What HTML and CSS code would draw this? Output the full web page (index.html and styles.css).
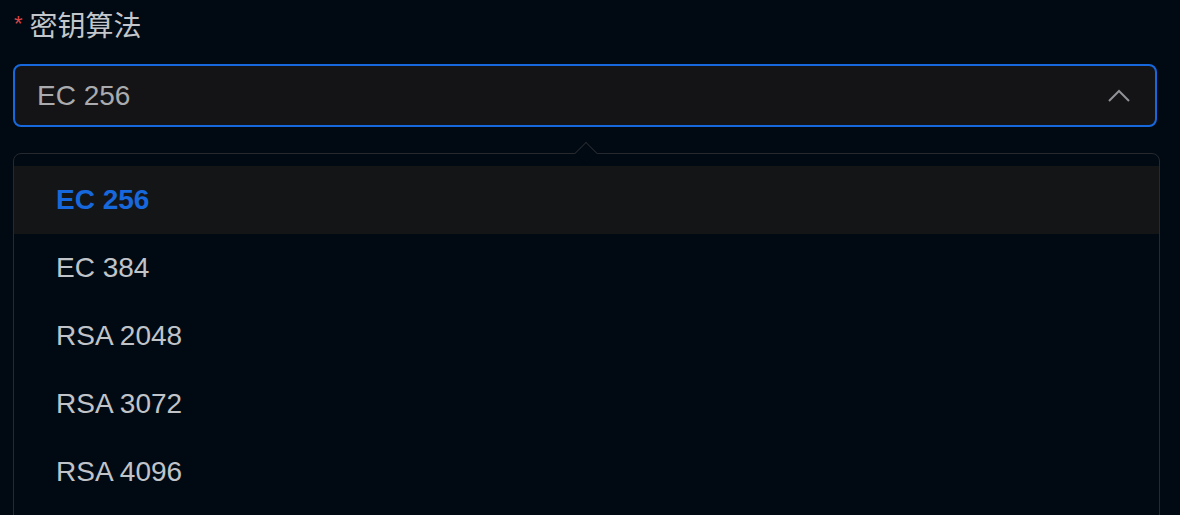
FILE: index.html
```html
<!DOCTYPE html>
<html lang="zh-CN">
<head>
    <meta charset="UTF-8">
    <title>密钥算法</title>
    <link rel="stylesheet" href="styles.css">
</head>
<body>
    <div class="form-item">
        <label class="label"><span class="required">*</span>密钥算法</label>
        <div class="select open">
            <span class="select-value">EC 256</span>
            <svg class="select-arrow" width="24" height="16" viewBox="0 0 24 16">
                <path d="M2 13 L12 3 L22 13" fill="none" stroke="#8f9296" stroke-width="2"/>
            </svg>
        </div>
        <div class="dropdown">
            <div class="dropdown-caret"></div>
            <div class="option selected">EC 256</div>
            <div class="option">EC 384</div>
            <div class="option">RSA 2048</div>
            <div class="option">RSA 3072</div>
            <div class="option">RSA 4096</div>
        </div>
    </div>
</body>
</html>
```

FILE: styles.css
```css
html, body {
    height: 100%;
}
body {
    margin: 0;
    background-color: #010a13;
    font-family: "Liberation Sans", Arial, "Noto Sans CJK SC", sans-serif;
    overflow: hidden;
}
.form-item {
    padding: 4px 20px 0 13px;
}
.label {
    display: flex;
    align-items: center;
    height: 40px;
    font-size: 28px;
    color: #c3c6ca;
    font-family: "Noto Sans CJK SC", sans-serif;
    margin-bottom: 20px;
}
.required {
    color: #dc4446;
    font-family: "Liberation Sans", sans-serif;
    font-size: 22px;
    margin: 0 7px 0 1px;
}
.select {
    display: flex;
    align-items: center;
    justify-content: space-between;
    height: 63px;
    box-sizing: border-box;
    border: 2px solid #1668dc;
    border-radius: 8px;
    background-color: #141416;
    padding: 0 24px 0 22px;
    width: 1144px;
}
.select-value {
    font-size: 28px;
    color: #a9abae;
}
.dropdown {
    position: relative;
    margin-top: 26px;
    width: 1147px;
    height: 380px;
    box-sizing: border-box;
    border: 1px solid #26292e;
    border-radius: 8px;
    padding-top: 12px;
    background-color: #010a13;
}
.dropdown-caret {
    position: absolute;
    top: -9px;
    left: 564px;
    width: 15px;
    height: 15px;
    transform: rotate(45deg);
    border-top: 1px solid #26292e;
    border-left: 1px solid #26292e;
    background-color: #010a13;
}
.option {
    height: 68px;
    line-height: 68px;
    padding-left: 42px;
    font-size: 28px;
    color: #c0c4c9;
}
.selected {
    background-color: #141517;
    color: #1668dc;
    font-weight: bold;
}
```
